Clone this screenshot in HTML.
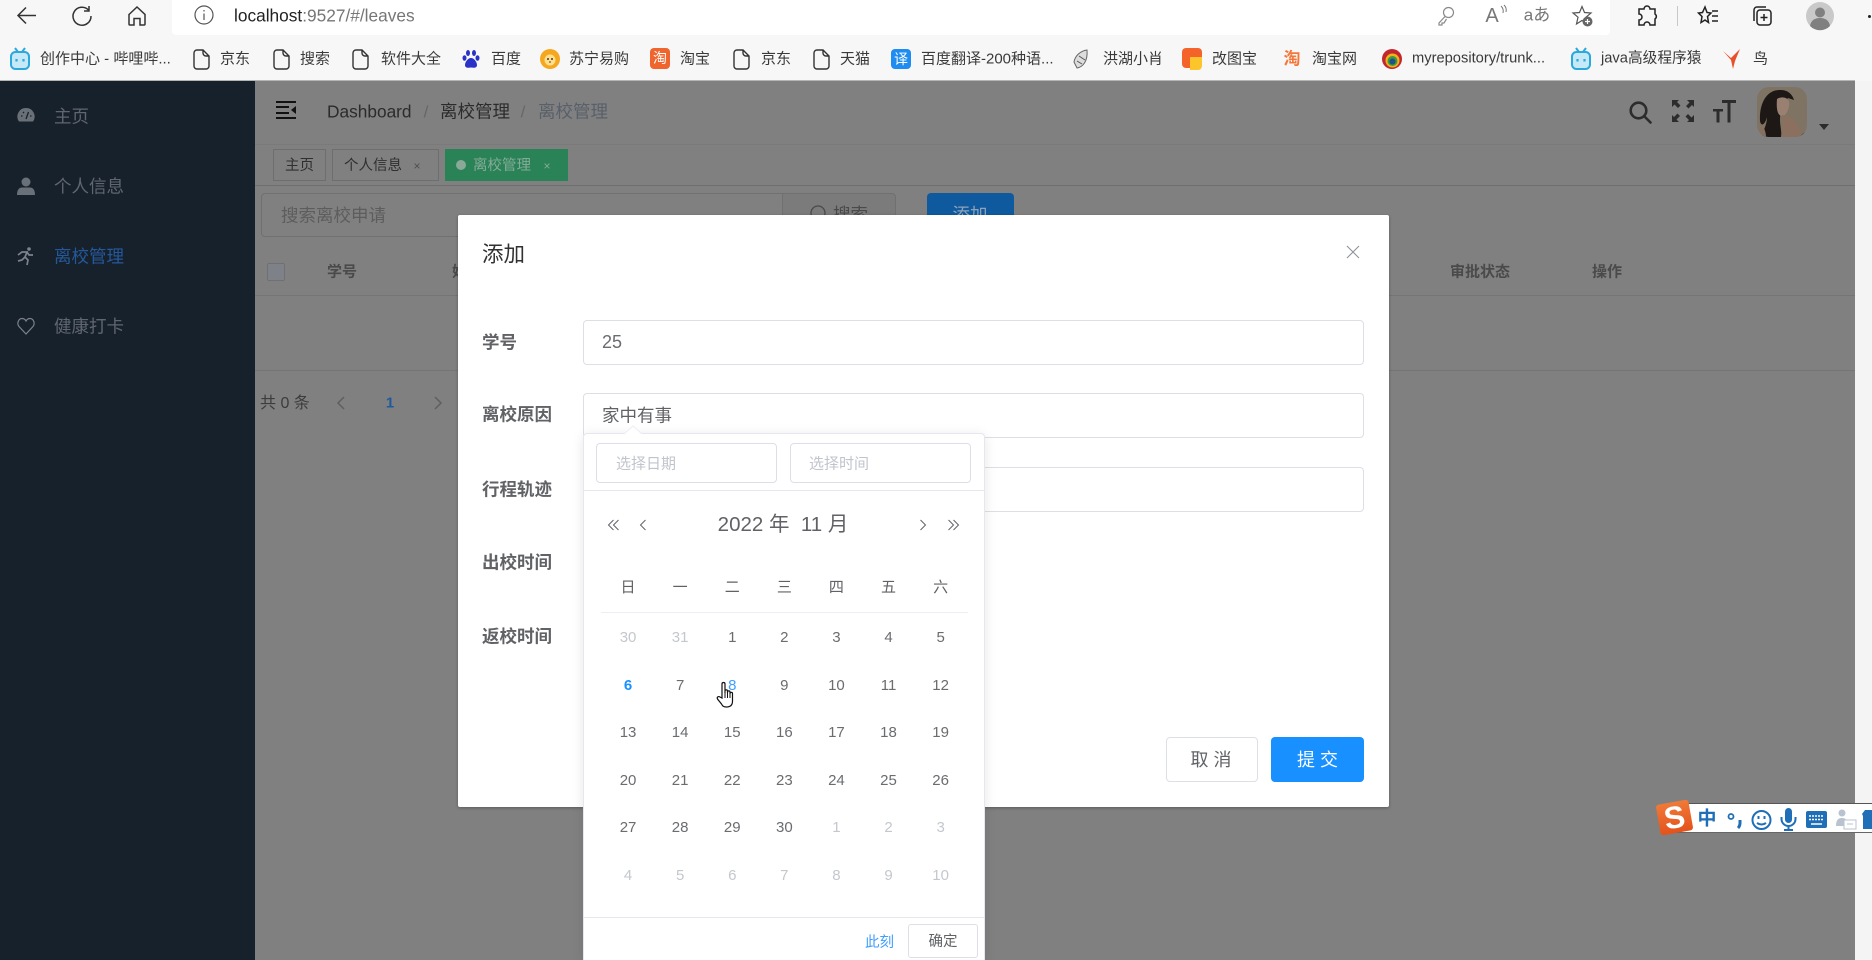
<!DOCTYPE html>
<html lang="zh"><head><meta charset="utf-8"><title>leaves</title>
<style>
*{box-sizing:border-box}
html,body{margin:0;padding:0;width:1872px;height:960px;overflow:hidden;background:#f7f7f7;font-family:"Liberation Sans","Noto Sans CJK SC",sans-serif}
#clip{position:absolute;left:0;top:0;width:1872px;height:960px;overflow:hidden}
.a{position:absolute}
.t{position:absolute;line-height:1;white-space:nowrap;transform:translateY(-50%)}
.c{position:absolute;line-height:1;white-space:nowrap;transform:translate(-50%,-50%)}
svg{position:absolute;overflow:visible}
.bm{font-size:15px;color:#3a3a3a}
.side{font-size:17.5px;color:#5f6670}
.th{font-size:15px;font-weight:700;color:#4a4a4a}
.lab{font-size:17.5px;font-weight:700;color:#606266}
.inp{position:absolute;left:583px;width:781px;height:45px;border:1px solid #dcdfe6;border-radius:4px;background:#fff}
#grid{position:absolute;left:602px;top:614px;display:grid;grid-template-columns:repeat(7,52.1px);grid-auto-rows:47.5px;font-size:15px;color:#6a6c70;text-align:center;line-height:47.5px}
#grid i{font-style:normal;color:#c4c7cc}
#wk{position:absolute;left:602px;top:570.500px;display:grid;grid-template-columns:repeat(7,52.1px);font-size:15px;color:#606266;text-align:center;line-height:34px}
</style></head><body><div id="clip">

<!-- browser chrome -->
<div class="a" style="left:0;top:0;width:1872px;height:81px;background:#f7f7f7"></div>
<div class="a" style="left:172px;top:0;width:1438px;height:35px;background:#fff;border-radius:0 0 4px 4px"></div>
<svg style="left:16px;top:5px" width="22" height="22" viewBox="0 0 22 22" fill="none" stroke="#333" stroke-width="1.5"><path d="M20 10.500H2.500M10 2.500l-8 8 8 8"/></svg>
<svg style="left:71px;top:5px" width="22" height="22" viewBox="0 0 22 22" fill="none" stroke="#333" stroke-width="1.500"><path d="M17.500 5A9 9 0 1 0 20 11M18 1v5h-5"/></svg>
<svg style="left:127px;top:5px" width="20" height="22" viewBox="0 0 20 22" fill="none" stroke="#333" stroke-width="1.500"><path d="M2 9.500L10 2l8 7.500V19a1 1 0 0 1-1 1h-4v-6.500H7V20H3a1 1 0 0 1-1-1z"/></svg>
<svg style="left:194px;top:5px" width="20" height="20" viewBox="0 0 20 20" fill="none" stroke="#555" stroke-width="1.200"><circle cx="10" cy="10" r="9"/><path d="M10 8.500V15M10 5v1.500"/></svg>
<div class="t" style="left:234px;top:16px;font-size:17.300px;color:#767676"><span style="color:#222">localhost</span>:9527/#/leaves</div>

<svg style="left:1437px;top:6px" width="18" height="20" viewBox="0 0 18 20" fill="none" stroke="#8a8a8a" stroke-width="1.200"><circle cx="11.500" cy="6.500" r="5"/><path d="M8 10.500L2 17v2h3v-2h2l2.500-4"/></svg>
<div class="c" style="left:1492px;top:16px;font-size:20px;color:#777">A</div>
<svg style="left:1500px;top:5px" width="8" height="12" viewBox="0 0 8 12" fill="none" stroke="#777"><path d="M1 1q3 3 2 7M4 0q3 3 2 7"/></svg>
<div class="c" style="left:1537px;top:15px;font-size:17px;color:#777;font-family:'Liberation Sans','Noto Sans CJK JP',sans-serif">aあ</div>
<svg style="left:1572px;top:5px" width="22" height="22" viewBox="0 0 22 22"><path d="M10 1.500l2.500 6 6.500.5-5 4.200L15.500 19 10 15.500 4.500 19l1.500-6.800L1 8l6.500-.5z" fill="none" stroke="#555" stroke-width="1.200"/><circle cx="15.500" cy="16.500" r="5" fill="#666"/><path d="M13 16.500h5M15.500 14v5" stroke="#fff" stroke-width="1.200"/></svg>
<svg style="left:1636px;top:5px" width="22" height="22" viewBox="0 0 22 22" fill="none" stroke="#222" stroke-width="1.500"><path d="M8 4a3 3 0 0 1 6 0h5v5a3 3 0 0 1 0 5v6h-5a3 3 0 0 0-6 0H3v-5a3 3 0 0 0 0-6V4z"/></svg>
<div class="a" style="left:1677px;top:6px;width:1px;height:20px;background:#c8c8c8"></div>
<svg style="left:1697px;top:5px" width="22" height="22" viewBox="0 0 22 22" fill="none" stroke="#222" stroke-width="1.500"><path d="M8 2l2 5.500 4 .5-3.500 3.500 1 6L8 15l-4 2.500 1-6L1.500 8l4-.5zM15 6h6M15 11h6M15 16h6"/></svg>
<svg style="left:1751px;top:5px" width="22" height="22" viewBox="0 0 22 22" fill="none" stroke="#222" stroke-width="1.500"><rect x="6" y="5" width="14" height="15" rx="3"/><path d="M3 16V5a3 3 0 0 1 3-3h9M13 9v7M9.500 12.500h7"/></svg>
<svg style="left:1806px;top:2px" width="28" height="28" viewBox="0 0 28 28"><circle cx="14" cy="14" r="14" fill="#c9c9c9"/><circle cx="14" cy="10.500" r="5" fill="#808080"/><path d="M4 24c1-6 5-8 10-8s9 2 10 8a14 14 0 0 1-20 0z" fill="#808080"/></svg>
<div class="a" style="left:1868px;top:15px;width:3px;height:3px;background:#222;border-radius:50%"></div>

<!-- bookmarks -->
<svg style="left:10px;top:47px" width="20" height="23" viewBox="0 0 20 23"><path d="M5 1l3 4M15 1l-3 4" stroke="#2ba8dc" stroke-width="2"/><rect x="1" y="5" width="18" height="17" rx="4.500" fill="#c5e9f7" stroke="#2ba8dc" stroke-width="2"/><path d="M6.500 12v2.500M13.500 12v2.500" stroke="#2ba8dc" stroke-width="2.200"/></svg>
<div class="t bm" style="left:40px;top:59px">创作中心 - 哔哩哔...</div>
<svg style="left:193px;top:49px" width="17" height="21" viewBox="0 0 17 21" fill="none" stroke="#333" stroke-width="1.400"><path d="M4 1h6l6 6v10a3 3 0 0 1-3 3H4a3 3 0 0 1-3-3V4a3 3 0 0 1 3-3zM10 1v3a3 3 0 0 0 3 3h3"/></svg>
<div class="t bm" style="left:220px;top:59px">京东</div>
<svg style="left:273px;top:49px" width="17" height="21" viewBox="0 0 17 21" fill="none" stroke="#333" stroke-width="1.400"><path d="M4 1h6l6 6v10a3 3 0 0 1-3 3H4a3 3 0 0 1-3-3V4a3 3 0 0 1 3-3zM10 1v3a3 3 0 0 0 3 3h3"/></svg>
<div class="t bm" style="left:300px;top:59px">搜索</div>
<svg style="left:352px;top:49px" width="17" height="21" viewBox="0 0 17 21" fill="none" stroke="#333" stroke-width="1.400"><path d="M4 1h6l6 6v10a3 3 0 0 1-3 3H4a3 3 0 0 1-3-3V4a3 3 0 0 1 3-3zM10 1v3a3 3 0 0 0 3 3h3"/></svg>
<div class="t bm" style="left:381px;top:59px">软件大全</div>
<svg style="left:462px;top:49px" width="18" height="20" viewBox="0 0 18 20" fill="#2932c8"><ellipse cx="6" cy="4" rx="2" ry="3"/><ellipse cx="12" cy="4" rx="2" ry="3"/><ellipse cx="2.500" cy="9" rx="2" ry="2.800"/><ellipse cx="15.500" cy="9" rx="2" ry="2.800"/><path d="M9 9c3 0 6 4 6 7s-3 3-6 2.500C6 19 3 19 3 16s3-7 6-7z"/></svg>
<div class="t bm" style="left:491px;top:59px">百度</div>
<svg style="left:540px;top:48px" width="20" height="22" viewBox="0 0 20 22"><circle cx="10" cy="11" r="10" fill="#f5a81f"/><circle cx="10" cy="12" r="5.500" fill="#ffe08a"/><circle cx="8" cy="11" r="1" fill="#533"/><circle cx="12" cy="11" r="1" fill="#533"/><path d="M9 14h2" stroke="#533"/></svg>
<div class="t bm" style="left:569px;top:59px">苏宁易购</div>
<div class="a" style="left:650px;top:48px;width:20px;height:21px;background:#f0642d;border-radius:4px;color:#fff;font-size:14px;line-height:21px;text-align:center">淘</div>
<div class="t bm" style="left:680px;top:59px">淘宝</div>
<svg style="left:733px;top:49px" width="17" height="21" viewBox="0 0 17 21" fill="none" stroke="#333" stroke-width="1.400"><path d="M4 1h6l6 6v10a3 3 0 0 1-3 3H4a3 3 0 0 1-3-3V4a3 3 0 0 1 3-3zM10 1v3a3 3 0 0 0 3 3h3"/></svg>
<div class="t bm" style="left:761px;top:59px">京东</div>
<svg style="left:813px;top:49px" width="17" height="21" viewBox="0 0 17 21" fill="none" stroke="#333" stroke-width="1.400"><path d="M4 1h6l6 6v10a3 3 0 0 1-3 3H4a3 3 0 0 1-3-3V4a3 3 0 0 1 3-3zM10 1v3a3 3 0 0 0 3 3h3"/></svg>
<div class="t bm" style="left:840px;top:59px">天猫</div>
<div class="a" style="left:891px;top:49px;width:20px;height:20px;background:#1e8cf0;border-radius:4px;color:#fff;font-size:14px;line-height:20px;text-align:center">译</div>
<div class="t bm" style="left:921px;top:59px">百度翻译-200种语...</div>
<svg style="left:1071px;top:48px" width="22" height="22" viewBox="0 0 22 22"><path d="M16 2C9 3 4 8 3 14l3 6c6-1 11-7 10-18z" fill="#ddd" stroke="#666"/><path d="M8 8l6 4M6 13l5 3" stroke="#555"/></svg>
<div class="t bm" style="left:1103px;top:59px">洪湖小肖</div>
<svg style="left:1182px;top:48px" width="20" height="22" viewBox="0 0 20 22"><rect width="20" height="20" x="0" y="0" rx="4" fill="#f4642a"/><path d="M8 9h12v9a4 4 0 0 1-4 4H8z" fill="#fdc52c"/></svg>
<div class="t bm" style="left:1212px;top:59px">改图宝</div>
<div class="c" style="left:1292px;top:59px;font-size:17px;font-weight:700;color:#f4783a">淘</div>
<div class="t bm" style="left:1312px;top:59px">淘宝网</div>
<svg style="left:1382px;top:49px" width="20" height="20" viewBox="0 0 20 20"><circle cx="10" cy="10" r="10" fill="#c2272d"/><circle cx="10.500" cy="11.500" r="7" fill="#f2b01e"/><circle cx="10.500" cy="12" r="5" fill="#3a9b3a"/><circle cx="10.500" cy="12.500" r="3" fill="#1f4f8c"/></svg>
<div class="t bm" style="left:1412px;top:59px;font-size:14.700px">myrepository/trunk...</div>
<svg style="left:1571px;top:47px" width="20" height="23" viewBox="0 0 20 23"><path d="M5 1l3 4M15 1l-3 4" stroke="#2ba8dc" stroke-width="2"/><rect x="1" y="5" width="18" height="17" rx="4.500" fill="#c5e9f7" stroke="#2ba8dc" stroke-width="2"/><path d="M6.500 12v2.500M13.500 12v2.500" stroke="#2ba8dc" stroke-width="2.200"/></svg>
<div class="t bm" style="left:1601px;top:59px;font-size:14.700px">java高级程序猿</div>
<svg style="left:1722px;top:48px" width="20" height="22" viewBox="0 0 20 22" fill="#e8502a"><path d="M1 3l8 7 9-9-5 12-2 8-2-9z"/></svg>
<div class="t bm" style="left:1753px;top:59px">鸟</div>

<!-- page under mask -->
<div class="a" style="left:0;top:81px;width:1855px;height:879px;background:#808080"></div>
<div class="a" style="left:1855px;top:81px;width:17px;height:879px;background:#f4f4f4"></div>
<div class="a" style="left:0;top:80px;width:1855px;height:1px;background:#b5b5b5"></div>
<div class="a" style="left:0;top:81px;width:255px;height:879px;background:#17212c"></div>

<!-- sidebar -->
<svg style="left:17px;top:107px" width="18" height="18" viewBox="0 0 18 18"><path d="M9 1a8.500 8.500 0 0 0-7 13.500h14A8.500 8.500 0 0 0 9 1z" fill="#6a7078"/><path d="M9 12L11.500 5M4 9h1.500M13 9h1.500M6 5l1 1" stroke="#17212c" stroke-width="1.300"/></svg>
<div class="t side" style="left:54px;top:117px">主页</div>
<svg style="left:17px;top:177px" width="18" height="18" viewBox="0 0 18 18" fill="#6a7078"><circle cx="9" cy="5" r="4.500"/><path d="M0 18c0-5 2-7.500 5-7.500h8c3 0 5 2.500 5 7.500z"/></svg>
<div class="t side" style="left:54px;top:187px">个人信息</div>
<svg style="left:17px;top:246px" width="18" height="20" viewBox="0 0 18 20" fill="none" stroke="#7c838c" stroke-width="1.700"><circle cx="12" cy="3" r="1.800" fill="#7c838c" stroke="none"/><path d="M1 9l4-3h5l-2 5 3 3-1 5M8 11l-3 3-4 1M10 6l2 3h4"/></svg>
<div class="t side" style="left:54px;top:257px;color:#24589b">离校管理</div>
<svg style="left:17px;top:317px" width="18" height="18" viewBox="0 0 18 18" fill="none" stroke="#7c838c" stroke-width="1.200"><path d="M9 17L2 9.500C-.5 6.500 1.500 1.500 5 1.500c2 0 3.200 1 4 2.500.8-1.500 2-2.500 4-2.500 3.500 0 5.500 5 3 8z"/></svg>
<div class="t side" style="left:54px;top:327px">健康打卡</div>

<!-- navbar -->
<div class="a" style="left:255px;top:144px;width:1600px;height:1px;background:#7a7a7a"></div>
<svg style="left:276px;top:101px" width="20" height="18" viewBox="0 0 20 18" fill="#111"><rect width="20" height="2" y="0"/><rect width="13" height="2" y="5"/><rect width="13" height="2" y="11"/><rect width="20" height="2" y="16"/><path d="M20 5v8l-5-4z"/></svg>
<div class="t" style="left:327px;top:112px;font-size:17.300px;color:#2b2b2b">Dashboard</div>
<div class="c" style="left:426px;top:112px;font-size:17px;color:#666">/</div>
<div class="t" style="left:440px;top:112px;font-size:17.500px;color:#2b2b2b">离校管理</div>
<div class="c" style="left:523px;top:112px;font-size:17px;color:#666">/</div>
<div class="t" style="left:538px;top:112px;font-size:17.500px;color:#58606a">离校管理</div>
<svg style="left:1629px;top:101px" width="23" height="23" viewBox="0 0 23 23" fill="none" stroke="#2c2c2c" stroke-width="2.600"><circle cx="9.500" cy="9.500" r="7.800"/><path d="M15 15l6.500 6.500" stroke-linecap="round"/></svg>
<svg style="left:1672px;top:100px" width="22" height="22" viewBox="0 0 22 22" fill="#2c2c2c"><path d="M0 0h7L5 2l3.500 3.500-2.500 2.500L2.500 4.500 0 7zM22 0v7l-2-2-3.500 3.500L14 6l3.500-3.500L15 0zM0 22v-7l2 2 3.500-3.500L8 16l-3.500 3.500L7 22zM22 22h-7l2-2-3.500-3.500L16 14l3.500 3.500L22 15z"/></svg>
<svg style="left:1713px;top:100px" width="23" height="23" viewBox="0 0 23 23" fill="#2c2c2c"><path d="M9 0h14v3h-5.500v19.500h-3V3H9zM0 9h10v2.500H6.500v11h-3v-11H0z"/></svg>
<svg style="left:1757px;top:87px" width="50" height="50" viewBox="0 0 50 50"><defs><clipPath id="av"><rect width="50" height="50" rx="12"/></clipPath></defs><g clip-path="url(#av)"><rect width="50" height="50" fill="#7f7464"/><path d="M4 50C6 44 10 38 10 30 8 38 4 40 3 34 2 16 10 2 24 3c8 0 12 6 13 10l-6-2c-6 6-8 14-8 22 0 6 2 12 1 17z" fill="#1d1815"/><path d="M20 12c4-3 11-2 12 3 1 6-3 14-7 14-4 0-6-6-5-17z" fill="#9a8070"/><path d="M25 28c10 2 17 6 20 22H24c2-8 2-15 1-22z" fill="#8b705f"/><path d="M3 36c3 2 6 8 6 14H2z" fill="#86705f"/><path d="M42 50l7-6-2 6z" fill="#121212"/></g></svg>
<svg style="left:1819px;top:124px" width="10" height="6"><path d="M0 0h10L5 6z" fill="#2c2c2c"/></svg>

<!-- tags -->
<div class="a" style="left:255px;top:185px;width:1600px;height:1px;background:#6f6f6f"></div>
<div class="a" style="left:273px;top:149px;width:53px;height:32px;border:1px solid #6e6e6e"></div>
<div class="c" style="left:299.500px;top:166px;font-size:14.500px;color:#2f2f2f">主页</div>
<div class="a" style="left:332px;top:149px;width:107px;height:32px;border:1px solid #6e6e6e"></div>
<div class="t" style="left:344px;top:166px;font-size:14.500px;color:#2f2f2f">个人信息</div>
<div class="c" style="left:417px;top:166px;font-size:12px;color:#4f4f4f">×</div>
<div class="a" style="left:445px;top:149px;width:123px;height:32px;background:#2a8257"></div>
<div class="a" style="left:456px;top:160px;width:10px;height:10px;border-radius:50%;background:#8aa998"></div>
<div class="t" style="left:473px;top:166px;font-size:14.500px;color:#85ab98">离校管理</div>
<div class="c" style="left:547px;top:166px;font-size:12px;color:#85ab98">×</div>

<!-- filter -->
<div class="a" style="left:261px;top:193px;width:522px;height:44px;border:1px solid #6f7074;border-radius:4px 0 0 4px"></div>
<div class="t" style="left:281px;top:216px;font-size:17.500px;color:#5d5d5d">搜索离校申请</div>
<div class="a" style="left:782px;top:193px;width:114px;height:44px;border:1px solid #6f7074;border-radius:0 4px 4px 0;background:#7b7b7b"></div>
<svg style="left:810px;top:205px" width="16" height="16" fill="none" stroke="#4a4a4a" stroke-width="1.300"><circle cx="8" cy="8" r="7"/></svg>
<div class="t" style="left:833px;top:215px;font-size:17.500px;color:#4a4a4a">搜索</div>
<div class="a" style="left:927px;top:193px;width:87px;height:44px;background:#0f5a9f;border-radius:4px"></div>
<div class="c" style="left:970px;top:215px;font-size:17.500px;color:#8fa3b8">添加</div>

<!-- table -->
<div class="a" style="left:267px;top:263px;width:18px;height:18px;background:#7f8189;border:1px solid #6f7074;border-radius:2px"></div>
<div class="t th" style="left:327px;top:272px">学号</div>
<div class="t th" style="left:452px;top:272px">姓</div>
<div class="t th" style="left:1450px;top:272px">审批状态</div>
<div class="t th" style="left:1592px;top:272px">操作</div>
<div class="a" style="left:255px;top:295px;width:1600px;height:1px;background:#757575"></div>
<div class="a" style="left:255px;top:370px;width:1600px;height:1px;background:#757575"></div>
<div class="t" style="left:260px;top:404px;font-size:16px;color:#3c3c3c">共 0 条</div>
<svg style="left:336px;top:396px" width="9" height="14" fill="none" stroke="#5f5f5f" stroke-width="1.500"><path d="M8 1L2 7l6 6"/></svg>
<div class="c" style="left:390px;top:403px;font-size:15px;font-weight:700;color:#1f5a9c">1</div>
<svg style="left:434px;top:396px" width="9" height="14" fill="none" stroke="#5f5f5f" stroke-width="1.500"><path d="M1 1l6 6-6 6"/></svg>

<!-- modal -->
<div class="a" style="left:458px;top:215px;width:931px;height:592px;background:#fff;border-radius:2px;box-shadow:0 1px 3px rgba(0,0,0,.3)"></div>
<div class="t" style="left:482px;top:255px;font-size:21.500px;color:#303133">添加</div>
<svg style="left:1346px;top:245px" width="14" height="14" fill="none" stroke="#909399" stroke-width="1.100"><path d="M1 1l12 12M13 1L1 13"/></svg>
<div class="t lab" style="left:482px;top:343px">学号</div>
<div class="t lab" style="left:482px;top:415px">离校原因</div>
<div class="t lab" style="left:482px;top:490px">行程轨迹</div>
<div class="t lab" style="left:482px;top:563px">出校时间</div>
<div class="t lab" style="left:482px;top:637px">返校时间</div>
<div class="inp" style="top:320px"></div>
<div class="t" style="left:602px;top:342px;font-size:18px;color:#6a6c70">25</div>
<div class="inp" style="top:393px"></div>
<div class="t" style="left:602px;top:416px;font-size:17.500px;color:#606266">家中有事</div>
<div class="inp" style="top:467px"></div>
<div class="a" style="left:1166px;top:737px;width:92px;height:45px;border:1px solid #dcdfe6;border-radius:4px;background:#fff"></div>
<div class="c" style="left:1213.500px;top:760px;font-size:18px;color:#606266;letter-spacing:5px">取消</div>
<div class="a" style="left:1271px;top:737px;width:93px;height:45px;border-radius:4px;background:#1890ff"></div>
<div class="c" style="left:1320px;top:760px;font-size:18px;color:#fff;letter-spacing:5px">提交</div>

<!-- date picker -->
<div class="a" style="left:583px;top:433px;width:402px;height:527px;background:#fff;border:1px solid #e4e7ed;border-bottom:0;border-radius:4px 4px 0 0;box-shadow:0 2px 12px rgba(0,0,0,.1)"></div>
<svg style="left:624px;top:426px" width="18" height="8"><path d="M0 8L9 0l9 8" fill="#fff"/><path d="M0 8L9 0l9 8" fill="none" stroke="#ebeef5"/></svg>
<div class="a" style="left:596px;top:443px;width:181px;height:40px;border:1px solid #dcdfe6;border-radius:4px"></div>
<div class="t" style="left:616px;top:464px;font-size:15px;color:#c0c4cc">选择日期</div>
<div class="a" style="left:790px;top:443px;width:181px;height:40px;border:1px solid #dcdfe6;border-radius:4px"></div>
<div class="t" style="left:809px;top:464px;font-size:15px;color:#c0c4cc">选择时间</div>
<div class="a" style="left:584px;top:490px;width:400px;height:1px;background:#e4e7ed"></div>
<svg style="left:608px;top:519px" width="11" height="12" fill="none" stroke="#606266"><path d="M5.500 1L.5 6l5 5M10.500 1l-5 5 5 5"/></svg>
<svg style="left:640px;top:519px" width="6" height="12" fill="none" stroke="#606266"><path d="M5.500 1L.5 6l5 5"/></svg>
<svg style="left:920px;top:519px" width="6" height="12" fill="none" stroke="#606266"><path d="M.5 1l5 5-5 5"/></svg>
<svg style="left:948px;top:519px" width="11" height="12" fill="none" stroke="#606266"><path d="M.5 1l5 5-5 5M5.500 1l5 5-5 5"/></svg>
<div class="c" style="left:783px;top:525px;font-size:20.500px;color:#606266;white-space:pre">2022 年  11 月</div>
<div id="wk"><span>日</span><span>一</span><span>二</span><span>三</span><span>四</span><span>五</span><span>六</span></div>
<div class="a" style="left:601px;top:612px;width:367px;height:1px;background:#ebeef5"></div>
<div id="grid">
<i>30</i><i>31</i><span>1</span><span>2</span><span>3</span><span>4</span><span>5</span>
<b style="color:#1890ff">6</b><span>7</span><span style="color:#409eff">8</span><span>9</span><span>10</span><span>11</span><span>12</span>
<span>13</span><span>14</span><span>15</span><span>16</span><span>17</span><span>18</span><span>19</span>
<span>20</span><span>21</span><span>22</span><span>23</span><span>24</span><span>25</span><span>26</span>
<span>27</span><span>28</span><span>29</span><span>30</span><i>1</i><i>2</i><i>3</i>
<i>4</i><i>5</i><i>6</i><i>7</i><i>8</i><i>9</i><i>10</i>
</div>
<svg style="left:716px;top:682px" width="20" height="26" viewBox="0 0 20 26"><path d="M6 2c0-2 3-2 3 0v9V9c0-1.500 2.500-1.500 2.500 0v2-1c0-1.500 2.500-1.500 2.500 0v2-.5c0-1.500 2.500-1.500 2.500 0V19c0 4-2 6-6 6-3 0-4-1-5-3l-4-5c-1-2 1-3 2.500-2L6 16z" fill="#fff" stroke="#111" stroke-width="1.200"/><path d="M9 11v5M11.500 11v5M14 12v4" stroke="#111"/></svg>
<div class="a" style="left:584px;top:917px;width:400px;height:1px;background:#e4e7ed"></div>
<div class="t" style="left:865px;top:943px;font-size:14.500px;color:#409eff">此刻</div>
<div class="a" style="left:908px;top:924px;width:70px;height:34px;border:1px solid #dcdfe6;border-radius:3px;background:#fff"></div>
<div class="c" style="left:943px;top:942px;font-size:14.500px;color:#606266">确定</div>

<!-- IME bar -->
<div class="a" style="left:1675px;top:803px;width:197px;height:30px;background:#fff;border-top:1px solid #555;border-bottom:1px solid #666"></div>
<div class="a" style="left:1658px;top:802px;width:33px;height:31px;background:linear-gradient(#f07a38,#e4521b);transform:rotate(-10deg);border-radius:3px;color:#fff;font-size:31px;font-weight:700;line-height:31px;text-align:center">S</div>
<div class="c" style="left:1707px;top:819px;font-size:19px;font-weight:700;color:#1f6fb8">中</div>
<svg style="left:1727px;top:812px" width="16" height="18" viewBox="0 0 16 18" fill="none" stroke="#1f6fb8" stroke-width="1.800"><circle cx="4" cy="4.500" r="2.500"/><path d="M13 8v3q0 3-2 5" stroke-width="3"/></svg>
<svg style="left:1751px;top:809px" width="21" height="22" viewBox="0 0 21 22" fill="none" stroke="#1f6fb8" stroke-width="2"><circle cx="10.500" cy="11" r="9"/><path d="M7.500 7v3M13.500 7v3M6 14q4.500 3 9 0"/></svg>
<svg style="left:1780px;top:808px" width="17" height="23" viewBox="0 0 17 23" fill="#1f6fb8"><rect x="5" y="0" width="7" height="15" rx="3.500"/><path d="M1.500 9v2a7 7 0 0 0 14 0V9M8.500 18v4M4 22h9" fill="none" stroke="#1f6fb8" stroke-width="2"/></svg>
<svg style="left:1806px;top:811px" width="21" height="17" viewBox="0 0 21 17"><rect width="21" height="17" rx="2" fill="#1f6fb8"/><path d="M3 5h15M3 8.500h15" stroke="#fff" stroke-dasharray="2 1" stroke-width="1.500"/><path d="M5 13h11" stroke="#fff" stroke-width="1.500"/></svg>
<svg style="left:1835px;top:809px" width="22" height="21" viewBox="0 0 22 21"><circle cx="7" cy="4" r="3.500" fill="#b9c3d0"/><path d="M1 17c0-6 2-8 6-8s5 2 5 8z" fill="#b9c3d0"/><rect x="9" y="11" width="12" height="9" fill="#fff" stroke="#b9c3d0"/><path d="M12 15h6" stroke="#b9c3d0"/></svg>
<svg style="left:1862px;top:810px" width="10" height="19"><path d="M3 0h7v19H1V6L0 4z" fill="#1f6fb8"/></svg>
</div></body></html>
